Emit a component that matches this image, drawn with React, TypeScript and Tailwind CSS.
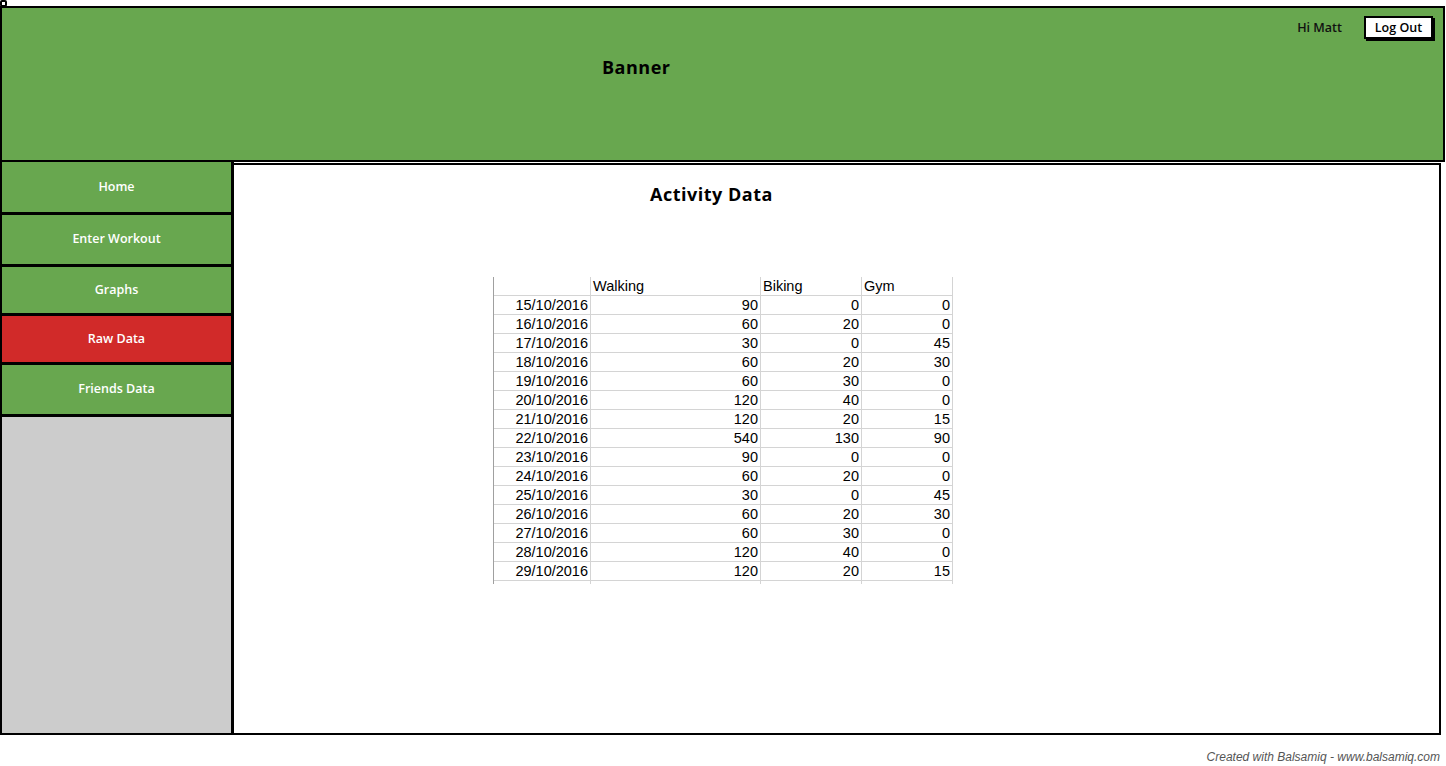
import React from 'react';

const rows: [string, number, number, number][] = [
  ['15/10/2016', 90, 0, 0],
  ['16/10/2016', 60, 20, 0],
  ['17/10/2016', 30, 0, 45],
  ['18/10/2016', 60, 20, 30],
  ['19/10/2016', 60, 30, 0],
  ['20/10/2016', 120, 40, 0],
  ['21/10/2016', 120, 20, 15],
  ['22/10/2016', 540, 130, 90],
  ['23/10/2016', 90, 0, 0],
  ['24/10/2016', 60, 20, 0],
  ['25/10/2016', 30, 0, 45],
  ['26/10/2016', 60, 20, 30],
  ['27/10/2016', 60, 30, 0],
  ['28/10/2016', 120, 40, 0],
  ['29/10/2016', 120, 20, 15],
];

const navItems = [
  { label: 'Home', h: 'h-[53px]' },
  { label: 'Enter Workout', h: 'h-[52px]' },
  { label: 'Graphs', h: 'h-[49px]' },
  { label: 'Raw Data', h: 'h-[49px]', active: true },
  { label: 'Friends Data', h: 'h-[52px]' },
];

const sketch = { fontFamily: '"Open Sans", Lato, sans-serif' };
const cell = 'h-[19px] border-r border-b border-[#d4d4d4] px-[2px] leading-[19px]';

export default function App() {
  return (
    <div className="relative w-[1446px] h-[766px] bg-white overflow-hidden" style={sketch}>
      {/* corner handle */}
      <div className="absolute left-0 top-0 w-[7px] h-[7px] bg-white border-2 border-black rounded-[2px] z-10" />

      {/* Banner */}
      <header className="mt-[6px] w-[1445px] h-[156px] bg-[#68a74f] border-2 border-black flex relative">
        <div className="pl-[600px] pt-[46px] text-[18px] font-bold tracking-[0.5px] text-black">Banner</div>
        <div className="ml-auto flex items-start pt-[8px] pr-[10px] gap-[22px]">
          <span className="text-[12.5px] font-semibold text-[#111] pt-[3px]">Hi Matt</span>
          <button className="w-[69px] h-[23px] bg-white border-2 border-black shadow-[2px_2px_0_#000] text-[12.5px] font-semibold leading-[17px] text-black">
            Log Out
          </button>
        </div>
      </header>

      <div className="flex h-[573px]">
        {/* Sidebar */}
        <aside className="w-[234px] flex flex-col border-l-2 border-r-[3px] border-b-2 border-black bg-[#cccccc]">
          {navItems.map((item) => (
            <div
              key={item.label}
              className={`${item.h} shrink-0 border-b-[3px] border-black flex items-center justify-center text-white text-[12.5px] font-semibold ${
                item.active ? 'bg-[#d12a29]' : 'bg-[#68a74f]'
              }`}
            >
              {item.label}
            </div>
          ))}
          <div className="flex-1" />
        </aside>

        {/* Main */}
        <main className="w-[1207px] h-[572px] mt-[1px] border-2 border-l-0 border-black bg-white">
          <h1 className="pl-[416px] pt-[16px] text-[18px] font-bold tracking-[0.5px] text-black">Activity Data</h1>

          <div
            className="ml-[259px] mt-[69px] w-[460px] border-l border-[#a0a0a0] text-[14.5px] text-black"
            style={{ fontFamily: '"Liberation Sans", Arial, sans-serif' }}
          >
            <div className="grid grid-cols-[97px_170px_101px_91px]">
              <div className={cell} />
              <div className={`${cell} text-left`}>Walking</div>
              <div className={`${cell} text-left`}>Biking</div>
              <div className={`${cell} text-left`}>Gym</div>
              {rows.map(([d, w, b, g]) => (
                <React.Fragment key={d}>
                  <div className={`${cell} text-right`}>{d}</div>
                  <div className={`${cell} text-right`}>{w}</div>
                  <div className={`${cell} text-right`}>{b}</div>
                  <div className={`${cell} text-right`}>{g}</div>
                </React.Fragment>
              ))}
              <div className="h-[3px] border-r border-[#d4d4d4]" />
              <div className="h-[3px] border-r border-[#d4d4d4]" />
              <div className="h-[3px] border-r border-[#d4d4d4]" />
              <div className="h-[3px] border-r border-[#d4d4d4]" />
            </div>
          </div>
        </main>
      </div>

      <div
        className="absolute right-[6px] bottom-0 text-[12px] italic text-[#555]"
        style={{ fontFamily: '"Liberation Sans", Arial, sans-serif' }}
      >
        Created with Balsamiq - www.balsamiq.com
      </div>
    </div>
  );
}
